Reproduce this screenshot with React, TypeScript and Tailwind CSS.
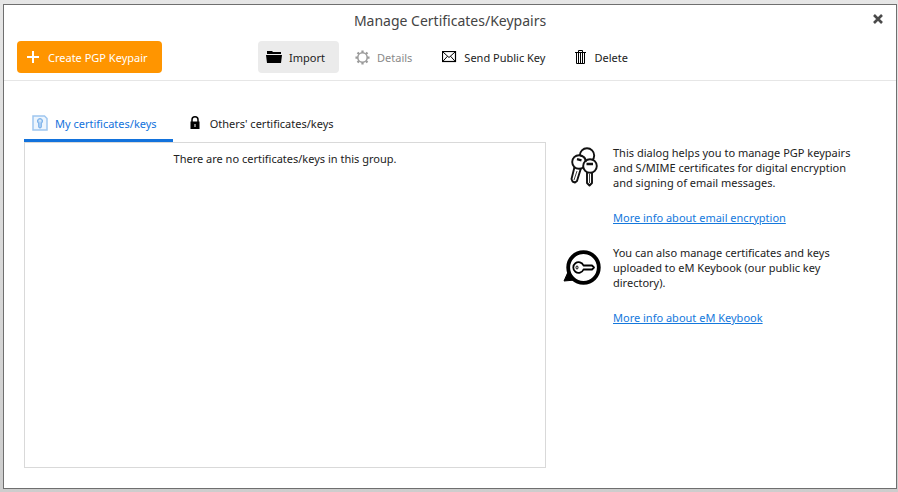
import React, { useState } from "react";
import clsx from "clsx";

interface ToolbarAction {
  label: string;
  icon: React.ReactNode;
  hovered?: boolean;
  disabled?: boolean;
}

interface HelpTopic {
  text: string;
  link: string;
  icon: React.ReactNode;
}

function PlusIcon() {
  return (
    <svg width="12" height="12" viewBox="0 0 12 12" aria-hidden="true">
      <path d="M5 0h2v5h5v2H7v5H5V7H0V5h5z" fill="currentColor" />
    </svg>
  );
}

function FolderIcon() {
  return (
    <svg width="16" height="14" viewBox="0 0 16 14" aria-hidden="true">
      <path d="M1 1h5l1 1h8v2H1z" fill="#000" />
      <path d="M0 5h16l-1 8H1z" fill="#000" />
    </svg>
  );
}

function GearIcon() {
  return (
    <svg width="15" height="15" viewBox="0 0 16 16" fill="none" aria-hidden="true">
      <circle cx="8" cy="8" r="5" stroke="#9a9a9a" strokeWidth="1.600" />
      <path
        d="M8 0.500v2.500M8 13v2.500M0.500 8H3M13 8h2.500M2.700 2.700l1.600 1.600M11.700 11.700l1.600 1.600M2.700 13.300l1.600-1.600M11.700 4.300l1.600-1.600"
        stroke="#9a9a9a"
        strokeWidth="2.400"
      />
    </svg>
  );
}

function EnvelopeIcon() {
  return (
    <svg width="15" height="12" viewBox="0 0 15 12" fill="none" stroke="#000" aria-hidden="true">
      <rect x="0.500" y="0.500" width="13" height="10" strokeWidth="1.200" />
      <path d="M1 1l6 5.500L13 1M1 10.200l4.500-5M13 10.200L8.500 5.200" />
    </svg>
  );
}

function TrashIcon() {
  return (
    <svg width="12" height="14" viewBox="0 0 12 14" fill="none" stroke="#000" aria-hidden="true">
      <path d="M0 2.500h11M3.500 2V0.500h4V2M1.500 3v10.500h8V3M3.500 3v10M5.500 3v10M7.500 3v10" />
    </svg>
  );
}

function CertificateIcon() {
  return (
    <svg width="16" height="16" viewBox="0 0 16 16" fill="none" aria-hidden="true">
      <path d="M1 1h11.500L15 3.500V15H1z" fill="#edf5fd" stroke="#9fc6f0" strokeWidth="1.500" />
      <path
        d="M8 3.500a2.600 2.600 0 0 1 1.300 4.800V12l-1.300 1-1.300-1V8.300A2.600 2.600 0 0 1 8 3.500z"
        fill="#b5d5f5"
        stroke="#7fb3ea"
        strokeWidth="1.200"
      />
      <path d="M8 5v1.500" stroke="#fff" />
    </svg>
  );
}

function LockIcon() {
  return (
    <svg width="10" height="14" viewBox="0 0 10 14" fill="none" aria-hidden="true">
      <path d="M2 6V3.800a3 3 0 0 1 6 0V6" stroke="#000" strokeWidth="1.500" />
      <rect x="0.500" y="5.500" width="9" height="7.500" fill="#000" />
      <path d="M5 8v3" stroke="#fff" />
    </svg>
  );
}

function KeysIcon() {
  return (
    <svg width="32" height="42" viewBox="0 -1 32 42" fill="none" stroke="#111" strokeWidth="1.900" aria-hidden="true">
      <circle cx="17" cy="9.500" r="7.200" />
      <path d="M4.500 21L1.500 33l1 2.500 2.500 1 2-1.500L11 22z" fill="#fff" strokeLinejoin="round" />
      <circle cx="9" cy="16" r="6.800" fill="#fff" />
      <path d="M17 26v11l2.500 2.500 2.500-2.500V26z" fill="#fff" strokeLinejoin="round" />
      <circle cx="20" cy="20" r="6.800" fill="#fff" />
      <path d="M16.500 18h6.500M7 13.200l4.500 1.200" strokeWidth="2.400" />
      <path d="M10.500 10c3.500 0 5.500 2.500 5.500 6" strokeWidth="1.400" />
      <path d="M19.500 28v9M7 25l-3 9" strokeWidth="0.800" />
    </svg>
  );
}

function KeybookIcon() {
  return (
    <svg width="39" height="40" viewBox="0 -2 39 40" fill="none" stroke="#000" aria-hidden="true">
      <path d="M5 25L1 34l11-1z" fill="#000" />
      <circle cx="20.500" cy="20.500" r="15.300" fill="#fff" strokeWidth="3.800" />
      <path
        d="M20.500 18.500h8.500l2 2-2 2h-8.500a5.300 5.300 0 1 1 0-4z"
        strokeWidth="1.800"
        strokeLinejoin="round"
      />
      <ellipse cx="14" cy="20.500" rx="1" ry="1.600" strokeWidth="1" />
    </svg>
  );
}

const actions: ToolbarAction[] = [
  { label: "Import", icon: <FolderIcon />, hovered: true },
  { label: "Details", icon: <GearIcon />, disabled: true },
  { label: "Send Public Key", icon: <EnvelopeIcon /> },
  { label: "Delete", icon: <TrashIcon /> },
];

const tabs = [
  { id: "mine", label: "My certificates/keys", icon: <CertificateIcon /> },
  { id: "others", label: "Others' certificates/keys", icon: <LockIcon /> },
];

const topics: HelpTopic[] = [
  {
    text: "This dialog helps you to manage PGP keypairs and S/MIME certificates for digital encryption and signing of email messages.",
    link: "More info about email encryption",
    icon: <KeysIcon />,
  },
  {
    text: "You can also manage certificates and keys uploaded to eM Keybook (our public key directory).",
    link: "More info about eM Keybook",
    icon: <KeybookIcon />,
  },
];

export default function App() {
  const [activeTab, setActiveTab] = useState("mine");

  return (
    <div className="flex min-h-screen bg-linear-to-b from-[#e6e6e6] to-[#cdcdcd] pt-1 pr-px pb-[3px] pl-[3px] font-['Noto_Sans','Open_Sans',sans-serif] text-[11px] leading-[15px] text-[#222]">
      <main className="flex grow flex-col border border-[#6f6f6f] bg-white">
        <header className="border-b border-[#e6e6e6] px-[13px] pb-[7px]">
          <div className="grid h-9 grid-cols-[1fr_auto_1fr] items-center">
            <h1 className="col-start-2 pb-1 text-[14px] leading-5 text-[#444]">
              Manage Certificates/Keypairs
            </h1>
            <button
              type="button"
              aria-label="Close"
              className="justify-self-end pb-2 text-[#4a4a4a]"
            >
              <svg width="10" height="10" viewBox="0 0 10 10" aria-hidden="true">
                <path d="M1 1l8 8M9 1L1 9" stroke="currentColor" strokeWidth="2.600" />
              </svg>
            </button>
          </div>

          <div className="grid grid-cols-[1fr_auto_1fr] items-center">
            <button
              type="button"
              className="flex h-8 items-center gap-[9px] justify-self-start rounded bg-[#ff9500] pr-[14px] pl-[10px] text-white"
            >
              <PlusIcon />
              Create PGP Keypair
            </button>
            <div className="flex gap-2">
              {actions.map((action) => (
                <button
                  key={action.label}
                  type="button"
                  disabled={action.disabled}
                  className={clsx(
                    "flex h-8 items-center gap-[7px] rounded pr-[14px] pl-2",
                    action.hovered && "bg-[#ebebeb]",
                    action.disabled && "text-[#8a8a8a]"
                  )}
                >
                  {action.icon}
                  {action.label}
                </button>
              ))}
            </div>
          </div>
        </header>

        <div className="grid grow grid-cols-[1fr_313px] gap-[17px] px-5 pt-[26px] pb-5">
          <div className="flex flex-col">
            <div role="tablist" className="flex gap-[6px]">
              {tabs.map((tab) => (
                <button
                  key={tab.id}
                  type="button"
                  role="tab"
                  aria-selected={activeTab === tab.id}
                  onClick={() => setActiveTab(tab.id)}
                  className={clsx(
                    "flex h-[35px] items-center gap-[7px] border-b-3 pr-4 pl-2",
                    activeTab === tab.id
                      ? "border-[#1272dc] text-[#1272dc]"
                      : "border-transparent"
                  )}
                >
                  <span className="flex w-4 justify-center">{tab.icon}</span>
                  {tab.label}
                </button>
              ))}
            </div>
            <section
              role="tabpanel"
              className="grow border border-[#d9d9d9] pt-2 text-center"
            >
              There are no certificates/keys in this group.
            </section>
          </div>

          <aside className="flex flex-col gap-5 pt-[38px]">
            {topics.map((topic) => (
              <div key={topic.link} className="flex gap-[11px]">
                <div className="flex w-[39px] shrink-0 justify-end">
                  {topic.icon}
                </div>
                <div className="max-w-[250px]">
                  <p>{topic.text}</p>
                  <a href="#" className="mt-5 inline-block text-[#1478dc] underline">
                    {topic.link}
                  </a>
                </div>
              </div>
            ))}
          </aside>
        </div>
      </main>
    </div>
  );
}
